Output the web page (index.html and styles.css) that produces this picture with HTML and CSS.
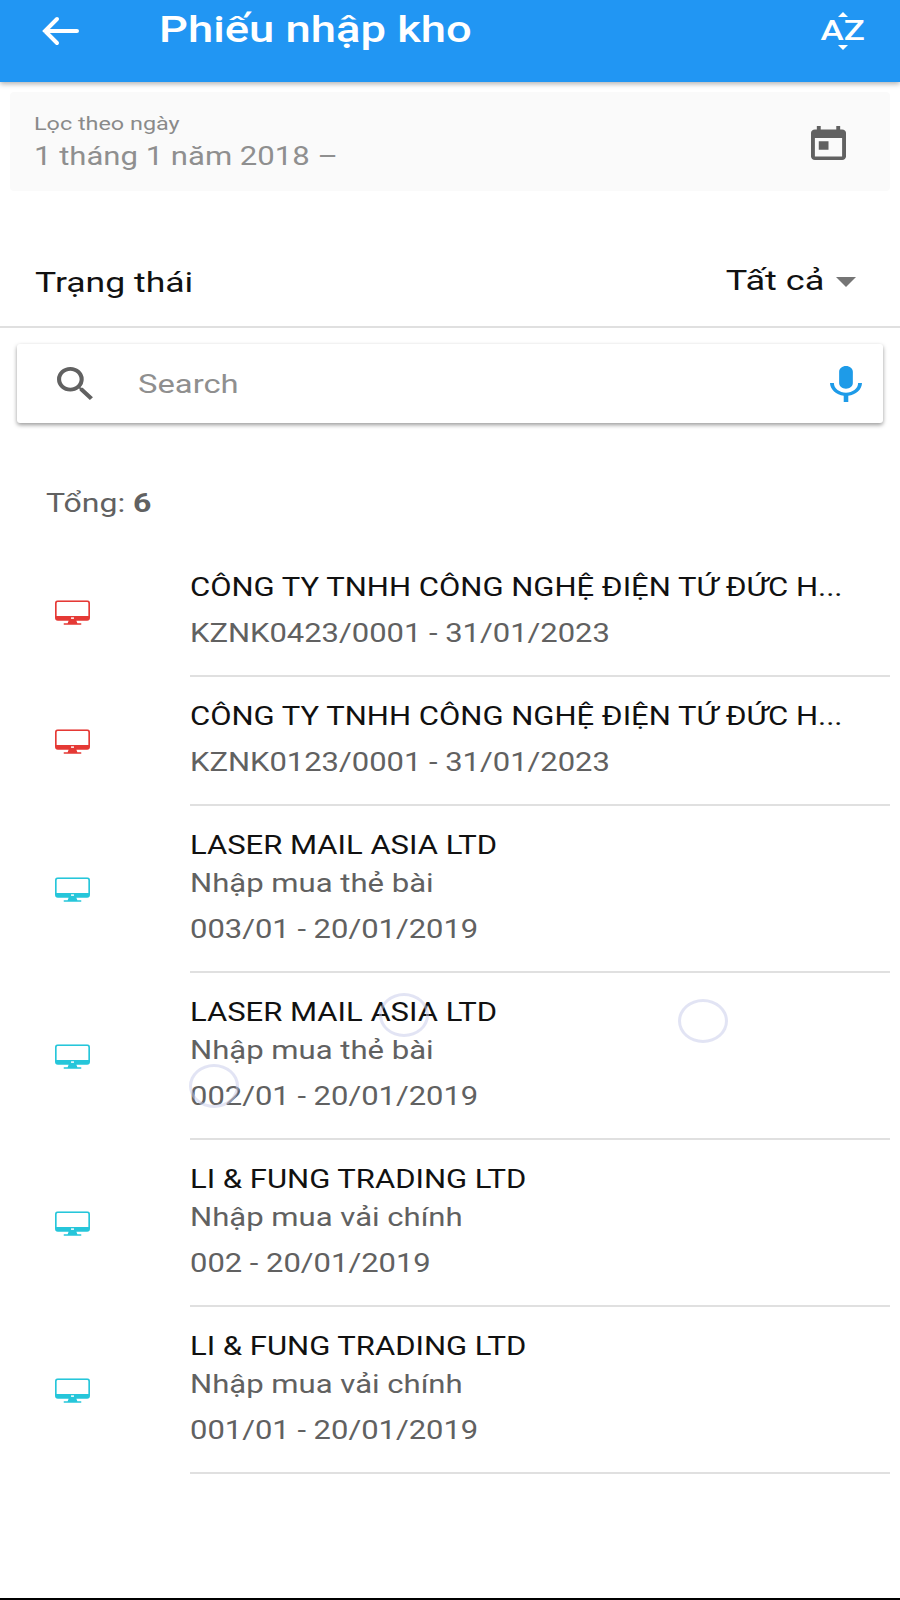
FILE: index.html
```html
<!DOCTYPE html>
<html lang="vi">
<head>
    <meta charset="UTF-8">
    <meta name="viewport" content="width=device-width, initial-scale=1.0">
    <title>Phiếu nhập kho</title>
    <link rel="stylesheet" href="styles.css">
</head>
<body>
    <div class="screen">
        <header class="app-bar">
            <svg class="back-icon" viewBox="0 0 40 32"><path d="M37 16H5M17 4 5 16l12 12" fill="none" stroke="#fff" stroke-width="4" stroke-linecap="round"/></svg>
            <h1 class="app-title">Phiếu nhập kho</h1>
            <div class="sort-btn">
                <span class="sort-up"></span>
                <span class="sort-text">AZ</span>
                <span class="sort-down"></span>
            </div>
        </header>

        <div class="date-filter">
            <div>
                <div class="date-label">Lọc theo ngày</div>
                <div class="date-value">1 tháng 1 năm 2018 –</div>
            </div>
            <svg class="calendar-icon" viewBox="3 1 18 20" preserveAspectRatio="none"><path fill="#616161" d="M19 3h-1V1h-2v2H8V1H6v2H5c-1.11 0-1.99.9-1.99 2L3 19c0 1.1.89 2 2 2h14c1.1 0 2-.9 2-2V5c0-1.1-.9-2-2-2zm0 16H5V8h14v11zM7 10h5v5H7z"/></svg>
        </div>

        <div class="status-row">
            <span class="status-label">Trạng thái</span>
            <span class="status-select"><span class="status-value">Tất cả</span><span class="caret"></span></span>
        </div>

        <div class="search-card">
            <svg class="search-icon" viewBox="3 3 18 18" preserveAspectRatio="none"><path fill="#616161" d="M15.5 14h-.79l-.28-.27A6.471 6.471 0 0 0 16 9.500 6.500 6.500 0 1 0 9.500 16c1.610 0 3.090-.59 4.230-1.570l.27.28v.79l5 4.990L20.490 19l-4.990-5zm-6 0C7.010 14 5 11.990 5 9.500S7.010 5 9.500 5 14 7.010 14 9.500 11.990 14 9.500 14z"/></svg>
            <span class="search-text">Search</span>
            <svg class="mic-icon" viewBox="5 2 14 19" preserveAspectRatio="none"><path fill="#1e9be8" d="M12 14c1.660 0 2.990-1.340 2.990-3L15 5c0-1.660-1.340-3-3-3S9 3.340 9 5v6c0 1.660 1.340 3 3 3zm5.300-3c0 3-2.540 5.100-5.300 5.100S6.700 14 6.700 11H5c0 3.410 2.720 6.230 6 6.720V21h2v-3.280c3.280-.48 6-3.300 6-6.720h-1.700z"/></svg>
        </div>

        <div class="total">Tổng: <b>6</b></div>

        <ul class="doc-list">
            <li class="doc-row">
                <div class="doc-icon red"><svg viewBox="0 0 36 26"><use href="#desktop"/></svg></div>
                <div class="doc-body">
                    <div class="doc-title">CÔNG TY TNHH CÔNG NGHỆ ĐIỆN TỨ ĐỨC H...</div>
                    <div class="doc-date">KZNK0423/0001 - 31/01/2023</div>
                </div>
            </li>
            <li class="doc-row">
                <div class="doc-icon red"><svg viewBox="0 0 36 26"><use href="#desktop"/></svg></div>
                <div class="doc-body">
                    <div class="doc-title">CÔNG TY TNHH CÔNG NGHỆ ĐIỆN TỨ ĐỨC H...</div>
                    <div class="doc-date">KZNK0123/0001 - 31/01/2023</div>
                </div>
            </li>
            <li class="doc-row">
                <div class="doc-icon cyan"><svg viewBox="0 0 36 26"><use href="#desktop"/></svg></div>
                <div class="doc-body">
                    <div class="doc-title">LASER MAIL ASIA LTD</div>
                    <div class="doc-note">Nhập mua thẻ bài</div>
                    <div class="doc-date">003/01 - 20/01/2019</div>
                </div>
            </li>
            <li class="doc-row">
                <div class="doc-icon cyan"><svg viewBox="0 0 36 26"><use href="#desktop"/></svg></div>
                <div class="doc-body">
                    <div class="doc-title">LASER MAIL ASIA LTD</div>
                    <div class="doc-note">Nhập mua thẻ bài</div>
                    <div class="doc-date">002/01 - 20/01/2019</div>
                </div>
            </li>
            <li class="doc-row">
                <div class="doc-icon cyan"><svg viewBox="0 0 36 26"><use href="#desktop"/></svg></div>
                <div class="doc-body">
                    <div class="doc-title">LI &amp; FUNG TRADING LTD</div>
                    <div class="doc-note">Nhập mua vải chính</div>
                    <div class="doc-date">002 - 20/01/2019</div>
                </div>
            </li>
            <li class="doc-row">
                <div class="doc-icon cyan"><svg viewBox="0 0 36 26"><use href="#desktop"/></svg></div>
                <div class="doc-body">
                    <div class="doc-title">LI &amp; FUNG TRADING LTD</div>
                    <div class="doc-note">Nhập mua vải chính</div>
                    <div class="doc-date">001/01 - 20/01/2019</div>
                </div>
            </li>
        </ul>

        <div class="touch-dot dot-a"></div>
        <div class="touch-dot dot-b"></div>
        <div class="touch-dot dot-c"></div>

        <div class="bottom-edge"></div>
    </div>

    <svg class="icon-defs" width="0" height="0">
        <symbol id="desktop" viewBox="0 0 36 26">
            <path fill="currentColor" fill-rule="evenodd" d="M3 0h30a3 3 0 0 1 3 3v15a3 3 0 0 1-3 3H22l1 2.500h4V25H9V23.500h4l1-2.500H3a3 3 0 0 1-3-3V3a3 3 0 0 1 3-3zM3 1.700a1.300 1.300 0 0 0-1.300 1.300v13h32.600V3A1.300 1.300 0 0 0 33 1.700z"/>
            <rect x="16.500" y="17.500" width="3" height="1.500" fill="#fff"/>
        </symbol>
    </svg>
</body>
</html>
```

FILE: styles.css
```css
* {
    box-sizing: border-box;
}
body {
    margin: 0;
    background-color: #ffffff;
    font-family: Roboto, "Noto Sans", sans-serif;
}
.screen {
    position: relative;
    display: flex;
    flex-direction: column;
    height: 1600px;
    overflow: hidden;
}
.icon-defs {
    position: absolute;
}

.app-title,
.sort-text,
.date-label,
.date-value,
.status-label,
.status-value,
.search-text,
.total,
.doc-title,
.doc-note,
.doc-date {
    transform-origin: left center;
}

/* app bar */
.app-bar {
    display: flex;
    align-items: flex-start;
    height: 82px;
    padding: 9px 34px 0 40px;
    background-color: #2196f3;
    box-shadow: 0 2px 5px rgba(0, 0, 0, 0.3);
    color: #fff;
}
.back-icon {
    width: 40px;
    height: 32px;
    margin-top: 6px;
}
.app-title {
    flex: 1;
    margin: 0 0 0 79px;
    font-size: 36px;
    line-height: 42px;
    font-weight: 500;
    transform: scaleX(1.26);
}
.sort-btn {
    display: flex;
    flex-direction: column;
    align-items: center;
    width: 46px;
    margin-top: 3px;
}
.sort-text {
    font-size: 28px;
    line-height: 28px;
    font-weight: 500;
    transform: scaleX(1.25);
    transform-origin: center;
}
.sort-up,
.sort-down {
    width: 0;
    height: 0;
    border-left: 5px solid transparent;
    border-right: 5px solid transparent;
}
.sort-up {
    border-bottom: 5px solid #fff;
}
.sort-down {
    border-top: 5px solid #fff;
}

/* date filter */
.date-filter {
    display: flex;
    align-items: center;
    justify-content: space-between;
    height: 99px;
    margin: 10px 10px 0;
    padding: 0 44px 0 24px;
    background-color: #fafafa;
    border-radius: 4px;
}
.date-label {
    font-size: 19px;
    line-height: 24px;
    color: #8a8a8a;
    transform: scaleX(1.23);
}
.date-value {
    margin-top: 4px;
    font-size: 26px;
    line-height: 32px;
    color: #8f8f8f;
    transform: scaleX(1.195);
}
.calendar-icon {
    width: 35px;
    height: 34px;
    margin-top: 3px;
}

/* status */
.status-row {
    display: flex;
    align-items: center;
    justify-content: space-between;
    height: 90px;
    margin-top: 47px;
    padding: 0 44px 0 35px;
    border-bottom: 2px solid #e0e0e0;
}
.status-label,
.status-value {
    font-size: 28px;
    color: #111;
    transform: scaleX(1.27);
}
.status-label {
    display: inline-block;
}
.status-select {
    display: flex;
    align-items: center;
}
.status-value {
    margin-bottom: 3px;
    transform: scaleX(1.29);
    transform-origin: right center;
}
.caret {
    width: 0;
    height: 0;
    margin-left: 12px;
    border-left: 10px solid transparent;
    border-right: 10px solid transparent;
    border-top: 10px solid #757575;
}

/* search */
.search-card {
    display: flex;
    align-items: center;
    height: 79px;
    margin: 16px 17px 0;
    padding: 0 21px 0 40px;
    background-color: #fff;
    border-radius: 3px;
    box-shadow: 0 2px 4px rgba(0, 0, 0, 0.4);
}
.search-icon {
    width: 37px;
    height: 34px;
}
.search-text {
    flex: 1;
    margin-left: 44px;
    font-size: 26px;
    color: #8f8f8f;
    transform: scaleX(1.26);
}
.mic-icon {
    width: 32px;
    height: 36px;
}

/* list */
.total {
    margin: 62px 0 0 46px;
    font-size: 26px;
    line-height: 36px;
    color: #616161;
    transform: scaleX(1.23);
}
.doc-list {
    margin: 27px 0 0;
    padding: 0;
    list-style: none;
}
.doc-row {
    display: flex;
    align-items: center;
}
.doc-icon {
    display: flex;
    justify-content: center;
    flex: none;
    width: 145px;
    margin-right: 45px;
}
.doc-icon svg {
    width: 35px;
    height: 26px;
}
.red {
    color: #e53935;
}
.cyan {
    color: #26c6da;
}
.doc-body {
    flex: 1;
    margin-right: 10px;
    padding: 22px 0 23px;
    border-bottom: 2px solid #e0e0e0;
}
.doc-title {
    font-size: 25px;
    line-height: 36px;
    color: #111;
    white-space: nowrap;
    transform: scaleX(1.24);
}
.doc-note {
    font-size: 26px;
    line-height: 38px;
    color: #616161;
    transform: scaleX(1.195);
}
.doc-date {
    margin-top: 9px;
    font-size: 26px;
    line-height: 37px;
    color: #616161;
    transform: scaleX(1.19);
}

/* touch indicators left on the screen */
.touch-dot {
    position: absolute;
    width: 50px;
    height: 44px;
    border: 3px solid rgba(197, 202, 233, 0.5);
    border-radius: 50%;
}
.dot-a {
    left: 379px;
    top: 993px;
}
.dot-b {
    left: 678px;
    top: 999px;
}
.dot-c {
    left: 189px;
    top: 1064px;
}

.bottom-edge {
    margin-top: auto;
    height: 2px;
    background-color: #000;
}
```
